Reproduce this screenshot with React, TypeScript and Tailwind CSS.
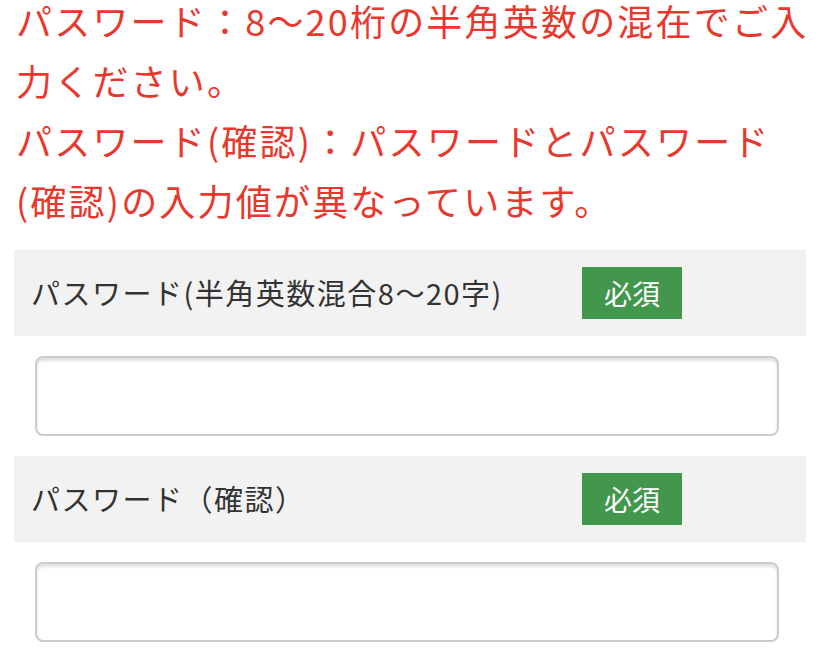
import React from 'react';

const Field: React.FC<{ label: string }> = ({ label }) => {
  return (
    <div>
      <div className="bg-[#f2f2f2] h-[86px] flex items-center pl-[17px]">
        <span className="w-[551px] text-[29px] text-[#333333] tracking-[1.5px]">{label}</span>
        <span className="w-[100px] h-[52px] bg-[#43974d] text-white text-[28px] flex items-center justify-center">必須</span>
      </div>
      <div className="pl-[21px] py-[20px]">
        <input
          type="password"
          className="block w-[744px] h-[80px] rounded-[8px] border-2 border-[#cccccc] bg-white shadow-[inset_0_3px_3px_rgba(0,0,0,0.12)] outline-none"
        />
      </div>
    </div>
  );
};

const App: React.FC = () => {
  return (
    <div className="bg-white min-h-[651px] overflow-hidden font-['Noto_Sans_CJK_JP','Noto_Sans',sans-serif]">
      <div className="px-4 -mt-[10px] text-[36px] leading-[60px] text-[#e8382d] tracking-[2.2px]">
        <p>パスワード：8〜20桁の半角英数の混在でご入力ください。</p>
        <p>パスワード(確認)：パスワードとパスワード(確認)の入力値が異なっています。</p>
      </div>
      <div className="ml-[14px] w-[792px] mt-[20px]">
        <Field label="パスワード(半角英数混合8〜20字)" />
        <Field label="パスワード（確認）" />
      </div>
    </div>
  );
};

export default App;
